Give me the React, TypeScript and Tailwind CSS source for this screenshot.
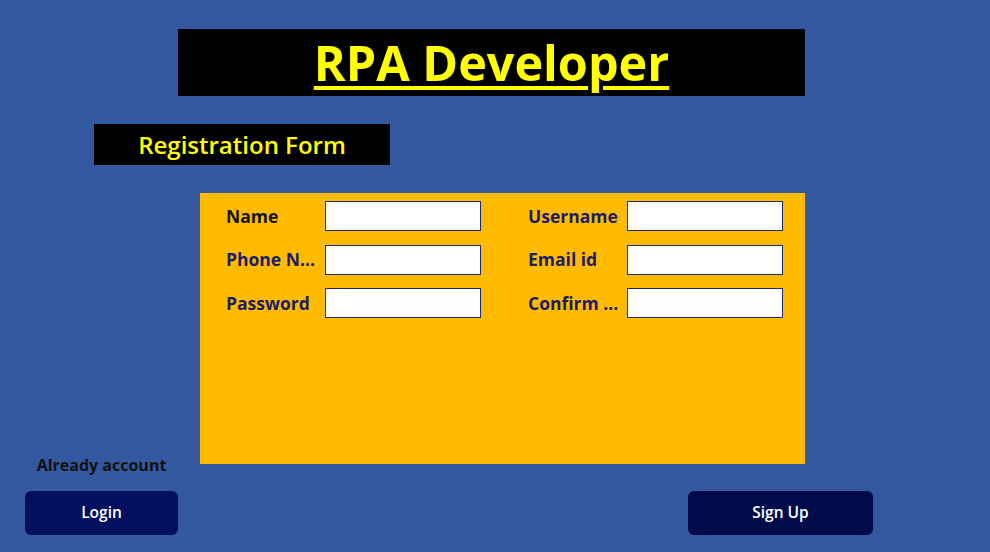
const font = { fontFamily: '"Open Sans", "Noto Sans", sans-serif' };

function Field({ label, dark }: { label: string; dark?: boolean }) {
  return (
    <div className="flex items-center h-[30px]">
      <span
        className={`w-[99px] text-[17.5px] font-bold whitespace-nowrap leading-none pt-[1px] ${
          dark ? "text-[#141414]" : "text-[#1d1b6b]"
        }`}
      >
        {label}
      </span>
      <div className="w-[156px] h-[30px] bg-white border-[1.5px] border-[#1d2a7a]" />
    </div>
  );
}

export default function App() {
  return (
    <div className="relative w-[990px] h-[552px] bg-[#3358a0] overflow-hidden" style={font}>
      <div className="pt-[29px] pl-[178px]">
        <div className="w-[627px] h-[67px] bg-black flex items-center justify-center">
          <h1 className="text-[48.5px] font-bold text-[#ffff00] underline decoration-[4px] underline-offset-[5px] leading-none">
            RPA Developer
          </h1>
        </div>
      </div>

      <div className="mt-[28px] ml-[94px] w-[296px] h-[41px] bg-black flex items-center justify-center">
        <span className="text-[24px] font-semibold text-[#ffff00]">Registration Form</span>
      </div>

      <div className="mt-[28px] ml-[200px] w-[605px] h-[271px] bg-[#ffbb00] pt-[8px] pl-[26px]">
        <div className="grid grid-cols-[302px_255px] gap-y-[13.5px]">
          <Field label="Name" dark />
          <Field label="Username" />
          <Field label="Phone N..." />
          <Field label="Email id" />
          <Field label="Password" />
          <Field label="Confirm ..." />
        </div>
      </div>

      <div className="flex items-end mt-[-10px]">
        <div className="ml-[25px] w-[153px] flex flex-col items-center">
          <span className="text-[16px] font-bold text-[#111111] leading-[22px]">Already account</span>
          <button className="mt-[15px] w-[153px] h-[44px] rounded-[6px] bg-[#000f5e] text-white text-[15.5px] font-semibold">
            Login
          </button>
        </div>
        <button className="ml-[510px] w-[185px] h-[44px] rounded-[6px] bg-[#000c4a] text-white text-[15.5px] font-semibold">
          Sign Up
        </button>
      </div>
    </div>
  );
}
